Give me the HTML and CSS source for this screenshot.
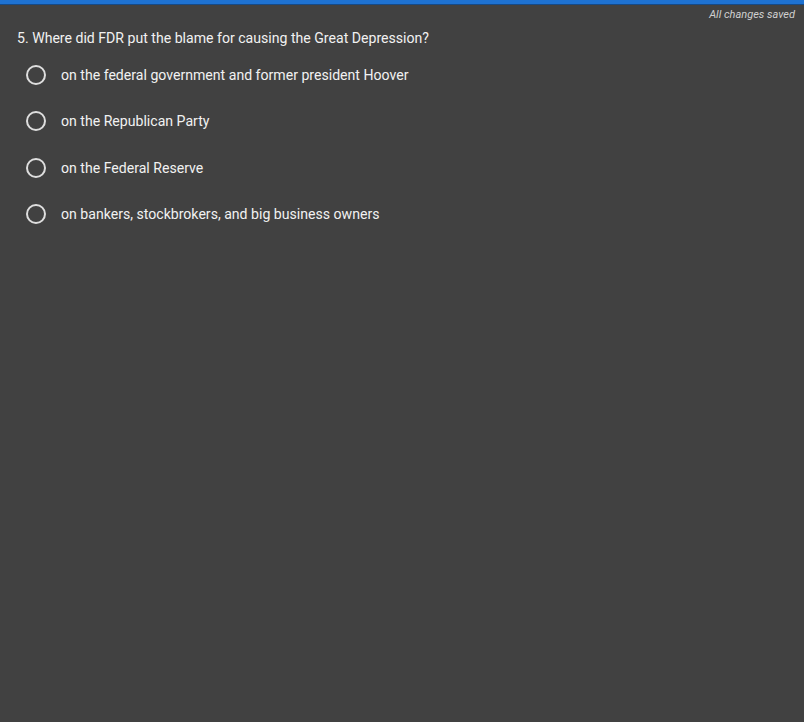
FILE: index.html
```html
<!DOCTYPE html>
<html lang="en">
<head>
<meta charset="UTF-8" />
<meta name="viewport" content="width=device-width, initial-scale=1" />
<title>Quiz</title>
<link rel="stylesheet" href="styles.css">
</head>
<body>
  <div class="topbar"></div>
  <div class="status">All changes saved</div>
  <main class="question">
    <h2 class="question__title">5. Where did FDR put the blame for causing the Great Depression?</h2>
    <ul class="options">
      <li class="option"><span class="radio"></span><span>on the federal government and former president Hoover</span></li>
      <li class="option"><span class="radio"></span><span>on the Republican Party</span></li>
      <li class="option"><span class="radio"></span><span>on the Federal Reserve</span></li>
      <li class="option"><span class="radio"></span><span>on bankers, stockbrokers, and big business owners</span></li>
    </ul>
  </main>
</body>
</html>
```

FILE: styles.css
```css
  body {
    margin: 0;
    background: #414141;
    color: #f1f1f1;
    font-family: Roboto, 'Liberation Sans', sans-serif;
    min-height: 100vh;
  }
  .topbar {
    height: 4px;
    background: #1e72d2;
    border-bottom: 1px solid #164a86;
  }
  .status {
    text-align: right;
    padding: 3px 9px 0 0;
    height: 15px;
    font-size: 11px;
    font-style: italic;
    color: #d0d0d0;
  }
  .question {
    padding: 0 17px;
  }
  .question__title {
    margin: 4px 0 0;
    font-size: 14.1px;
    font-weight: 400;
    line-height: 22px;
  }
  .options {
    list-style: none;
    margin: 14px 0 0;
    padding: 0 0 0 9px;
  }
  .option {
    display: flex;
    align-items: center;
    gap: 15px;
    height: 24px;
    margin-bottom: 22.4px;
    font-size: 14.1px;
  }
  .radio {
    width: 16px;
    height: 16px;
    border: 2px solid #dedede;
    border-radius: 50%;
    flex: none;
  }
```
